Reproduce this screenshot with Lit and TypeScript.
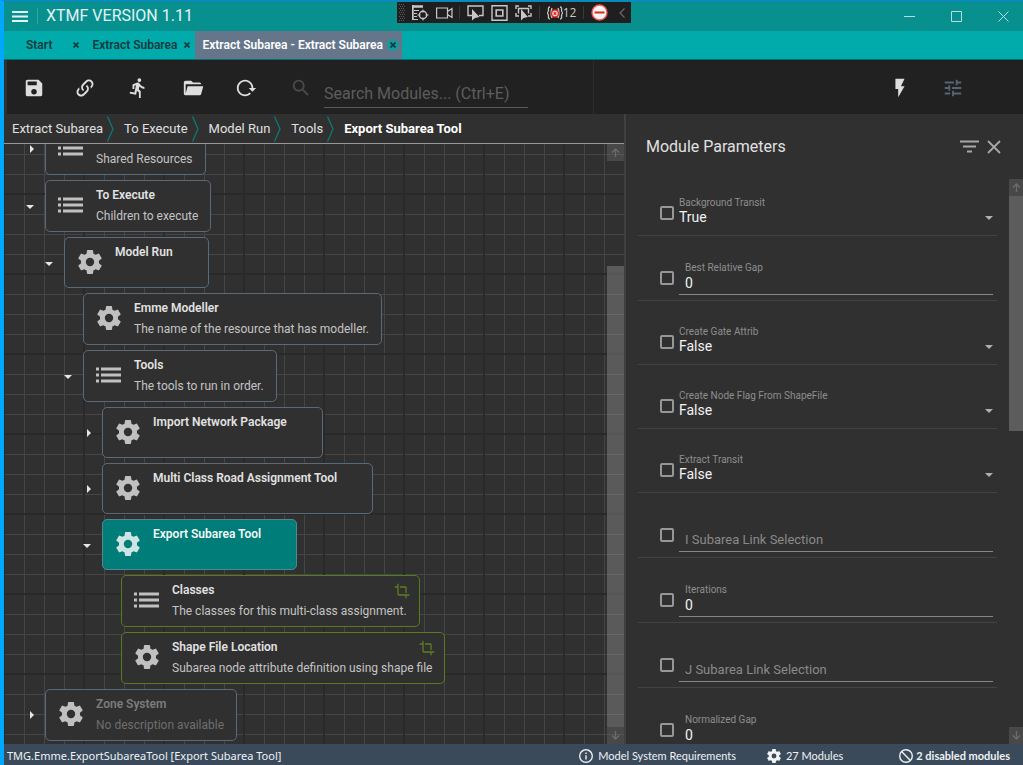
import { LitElement, html, svg, css, nothing } from "lit";
import { customElement, property } from "lit/decorators.js";
import { classMap } from "lit/directives/class-map.js";

const ICONS: Record<string, string> = {
  save: "M15,9H5V5H15M12,19A3,3 0 0,1 9,16A3,3 0 0,1 12,13A3,3 0 0,1 15,16A3,3 0 0,1 12,19M17,3H5C3.89,3 3,3.9 3,5V19A2,2 0 0,0 5,21H19A2,2 0 0,0 21,19V7L17,3Z",
  link: "M10.59,13.41C11,13.8 11,14.44 10.59,14.83C10.2,15.22 9.56,15.22 9.17,14.83C7.22,12.88 7.22,9.71 9.17,7.76V7.76L12.71,4.22C14.66,2.27 17.83,2.27 19.78,4.22C21.73,6.17 21.73,9.34 19.78,11.29L18.29,12.78C18.3,11.96 18.17,11.14 17.89,10.36L18.36,9.88C19.54,8.71 19.54,6.81 18.36,5.64C17.19,4.46 15.29,4.46 14.12,5.64L10.59,9.17C9.41,10.34 9.41,12.24 10.59,13.41M13.41,9.17C13.8,8.78 14.44,8.78 14.83,9.17C16.78,11.12 16.78,14.29 14.83,16.24V16.24L11.29,19.78C9.34,21.73 6.17,21.73 4.22,19.78C2.27,17.83 2.27,14.66 4.22,12.71L5.71,11.22C5.7,12.04 5.83,12.86 6.11,13.65L5.64,14.12C4.46,15.29 4.46,17.19 5.64,18.36C6.81,19.54 8.71,19.54 9.88,18.36L13.41,14.83C14.59,13.66 14.59,11.76 13.41,10.59C13,10.2 13,9.56 13.41,9.17Z",
  run: "M13.49,5.48C14.59,5.48 15.49,4.58 15.49,3.48C15.49,2.38 14.59,1.48 13.49,1.48C12.39,1.48 11.49,2.38 11.49,3.48A2,2 0 0,0 13.49,5.48M9.89,19.38L10.89,14.98L12.99,16.98V22.98H14.99V15.48L12.89,13.48L13.49,10.48A7.32,7.32 0 0,0 18.99,12.98V10.98A5.31,5.31 0 0,1 14.69,8.58L13.69,6.98C13.29,6.38 12.69,5.98 11.99,5.98C11.69,5.98 11.49,6.08 11.19,6.08L5.99,8.28V12.98H7.99V9.58L9.79,8.88L8.19,16.98L3.29,15.98L2.89,17.98L9.89,19.38Z",
  folder: "M19,20H4C2.89,20 2,19.1 2,18V6C2,4.89 2.89,4 4,4H10L12,6H19A2,2 0 0,1 21,8H21L4,8V18L6.14,10H23.21L20.93,18.5C20.7,19.37 19.92,20 19,20Z",
  reload: "M2 12C2 16.97 6.03 21 11 21C13.39 21 15.68 20.06 17.4 18.4L15.9 16.9C14.63 18.25 12.86 19 11 19C4.76 19 1.64 11.46 6.05 7.05C10.46 2.64 18 5.77 18 12H15L19 16H19.1L23 12H20C20 7.03 15.97 3 11 3C6.03 3 2 7.03 2 12Z",
  search: "M9.5,3A6.5,6.5 0 0,1 16,9.5C16,11.11 15.41,12.59 14.44,13.73L14.71,14H15.5L20.5,19L19,20.5L14,15.5V14.71L13.73,14.44C12.59,15.41 11.11,16 9.5,16A6.5,6.5 0 0,1 3,9.5A6.5,6.5 0 0,1 9.5,3M9.5,5C7,5 5,7 5,9.5C5,12 7,14 9.5,14C12,14 14,12 14,9.5C14,7 12,5 9.5,5Z",
  flash: "M7,2V13H10V22L17,10H13L17,2H7Z",
  tune: "M3,17V19H9V17H3M3,5V7H13V5H3M13,21V19H21V17H13V15H11V21H13M7,9V11H3V13H7V15H9V9H7M21,13V11H11V13H21M15,9H17V7H21V5H17V3H15V9Z",
  crop: "M7,17V1H5V5H1V7H5V17A2,2 0 0,0 7,19H17V23H19V19H23V17M17,15H19V7C19,5.89 18.1,5 17,5H9V7H17V15Z",
  cog: "M12,15.5A3.5,3.5 0 0,1 8.5,12A3.5,3.5 0 0,1 12,8.5A3.5,3.5 0 0,1 15.5,12A3.5,3.5 0 0,1 12,15.5M19.43,12.97C19.47,12.65 19.5,12.33 19.5,12C19.5,11.67 19.47,11.34 19.43,11L21.54,9.37C21.73,9.22 21.78,8.95 21.66,8.73L19.66,5.27C19.54,5.05 19.27,4.96 19.05,5.05L16.56,6.05C16.04,5.66 15.5,5.32 14.87,5.07L14.5,2.42C14.46,2.18 14.25,2 14,2H10C9.75,2 9.54,2.18 9.5,2.42L9.13,5.07C8.5,5.32 7.96,5.66 7.44,6.05L4.95,5.05C4.73,4.96 4.46,5.05 4.34,5.27L2.34,8.73C2.21,8.95 2.27,9.22 2.46,9.37L4.57,11C4.53,11.34 4.5,11.67 4.5,12C4.5,12.33 4.53,12.65 4.57,12.97L2.46,14.63C2.27,14.78 2.21,15.05 2.34,15.27L4.34,18.73C4.46,18.95 4.73,19.03 4.95,18.95L7.44,17.94C7.96,18.34 8.5,18.68 9.13,18.93L9.5,21.58C9.54,21.82 9.75,22 10,22H14C14.25,22 14.46,21.82 14.5,21.58L14.87,18.93C15.5,18.67 16.04,18.34 16.56,17.94L19.05,18.95C19.27,19.03 19.54,18.95 19.66,18.73L21.66,15.27C21.78,15.05 21.73,14.78 21.54,14.63L19.43,12.97Z",
  info: "M11,9H13V7H11M12,20C7.59,20 4,16.41 4,12C4,7.59 7.59,4 12,4C16.41,4 20,7.59 20,12C20,16.41 16.41,20 12,20M12,2A10,10 0 0,0 2,12A10,10 0 0,0 12,22A10,10 0 0,0 22,12A10,10 0 0,0 12,2M11,17H13V11H11V17Z",
  ban: "M12,2A10,10 0 0,0 2,12A10,10 0 0,0 12,22A10,10 0 0,0 22,12A10,10 0 0,0 12,2M12,4A8,8 0 0,1 20,12C20,13.85 19.37,15.55 18.31,16.9L7.1,5.69C8.45,4.63 10.15,4 12,4M5.69,7.1L16.9,18.31C15.55,19.37 13.85,20 12,20A8,8 0 0,1 4,12C4,10.15 4.63,8.45 5.69,7.1Z",
};

const icon = (name: string, size: number, box = "0 0 24 24") => html`<svg
  width=${size} height=${size} viewBox=${box} aria-hidden="true">
  <path fill="currentColor" fill-rule="evenodd" d=${ICONS[name]}></path>
</svg>`;

const listIcon = html`<svg width="25" height="16" viewBox="0 0 25 16" aria-hidden="true">
  <g fill="currentColor">
    ${[0, 6, 12].map((y) => svg`<rect x="0" y=${y + 0.5} width="3" height="3"/><rect x="5" y=${y + 0.5} width="20" height="3"/>`)}
  </g>
</svg>`;

const closeMark = html`<svg width="6" height="6" viewBox="0 0 6 6" aria-hidden="true">
  <path d="M0.5 0.5L5.5 5.5M5.5 0.5L0.5 5.5" stroke="currentColor" stroke-width="1.7"></path>
</svg>`;

const arrow = (up: boolean) => html`<svg width="9" height="9" viewBox="0 0 9 9" aria-hidden="true">
  <path d=${up ? "M4.5 9V1M1 4.5L4.5 1L8 4.5" : "M4.5 0V8M1 4.5L4.5 8L8 4.5"} fill="none" stroke="currentColor" stroke-width="1.3"></path>
</svg>`;

interface TreeNode {
  level: number;
  title: string;
  text?: string;
  kind: "list" | "module";
  toggle?: "open" | "closed";
  state?: "selected" | "linked" | "disabled";
}

const NODES: TreeNode[] = [
  { level: 0, title: "", text: "Shared Resources", kind: "list", toggle: "closed" },
  { level: 0, title: "To Execute", text: "Children to execute", kind: "list", toggle: "open" },
  { level: 1, title: "Model Run", kind: "module", toggle: "open" },
  { level: 2, title: "Emme Modeller", text: "The name of the resource that has modeller.", kind: "module" },
  { level: 2, title: "Tools", text: "The tools to run in order.", kind: "list", toggle: "open" },
  { level: 3, title: "Import Network Package", kind: "module", toggle: "closed" },
  { level: 3, title: "Multi Class Road Assignment Tool", kind: "module", toggle: "closed" },
  { level: 3, title: "Export Subarea Tool", kind: "module", toggle: "open", state: "selected" },
  { level: 4, title: "Classes", text: "The classes for this multi-class assignment.", kind: "list", state: "linked" },
  { level: 4, title: "Shape File Location", text: "Subarea node attribute definition using shape file", kind: "module", state: "linked" },
  { level: 0, title: "Zone System", text: "No description available", kind: "module", toggle: "closed", state: "disabled" },
];

interface Param {
  name: string;
  value: string;
  choice?: boolean;
}

const PARAMS: Param[] = [
  { name: "Background Transit", value: "True", choice: true },
  { name: "Best Relative Gap", value: "0" },
  { name: "Create Gate Attrib", value: "False", choice: true },
  { name: "Create Node Flag From ShapeFile", value: "False", choice: true },
  { name: "Extract Transit", value: "False", choice: true },
  { name: "I Subarea Link Selection", value: "" },
  { name: "Iterations", value: "0" },
  { name: "J Subarea Link Selection", value: "" },
  { name: "Normalized Gap", value: "0" },
];

const reset = css`
  * { box-sizing: border-box; }
  svg { display: block; flex: none; }
  button, input, select {
    margin: 0; padding: 0; border: 0; border-radius: 0; background: none;
    color: inherit; font: inherit; outline: none;
  }
  button { display: flex; align-items: center; justify-content: center; }
`;

@customElement("title-bar")
class TitleBar extends LitElement {
  static styles = [reset, css`
    :host { display: flex; align-items: center; height: 30px; padding: 0 12px 0 8px; background: #08908f; color: #e4f3f3; }
    .menu { width: 16px; height: 30px; }
    .rule { width: 1px; height: 16px; margin: 0 8px 0 9px; background: #3aa3a2; }
    .name { font-size: 16px; line-height: 30px; }
    .window { display: flex; gap: 32px; margin-left: auto; color: #b5dedd; }
    .window button { width: 15px; height: 30px; }
  `];
  render() {
    return html`
      <button class="menu" aria-label="Menu">
        <svg width="16" height="12" viewBox="0 0 16 12"><path d="M0 2H16M0 6.5H16M0 11H16" stroke="currentColor" stroke-width="1.8"></path></svg>
      </button>
      <span class="rule"></span>
      <span class="name">XTMF VERSION 1.11</span>
      <div class="window">
        <button aria-label="Minimize"><svg width="11" height="11" viewBox="0 0 11 11"><path d="M0 5.5H11" stroke="currentColor"></path></svg></button>
        <button aria-label="Maximize"><svg width="11" height="11" viewBox="0 0 11 11"><path d="M0.5 0.5H10.5V10.5H0.5Z" stroke="currentColor" fill="none"></path></svg></button>
        <button aria-label="Close"><svg width="11" height="11" viewBox="0 0 11 11"><path d="M0.5 0.5L10.5 10.5M10.5 0.5L0.5 10.5" stroke="currentColor"></path></svg></button>
      </div>`;
  }
}

@customElement("debug-bar")
class DebugBar extends LitElement {
  static styles = [reset, css`
    :host { display: flex; align-items: center; height: 21px; width: 234px; padding: 0 6px 0 2px; background: #1f1f1f; color: #c8c8c8; justify-content: space-between; }
    .count { display: flex; align-items: center; font: 12px/16px "Open Sans", sans-serif; }
    .bar { width: 1px; height: 13px; background: #3a3a3a; }
    .dim { margin-left: 4px; color: #6a6a6a; }
  `];
  render() {
    return html`
      <svg width="6" height="18" viewBox="0 0 6 18">
        ${[0, 1, 2, 3, 4, 5, 6, 7, 8].map((i) => svg`<path d="M${i % 2} ${i * 2 + 0.5}h1m1 0h1m1 0h1" stroke="#5a5a5a"/>`)}
      </svg>
      <button aria-label="Live tree">
        <svg width="17" height="16" viewBox="0 0 17 16" fill="none" stroke="currentColor">
          <path d="M0.5 0V15M0 1.5H11" stroke-width="2.4"></path><path d="M2 5.5H7M2 8.5H5M2 11.5H5M1 14.5H6"></path>
          <circle cx="11" cy="10" r="3.7" stroke-width="1.4"></circle><path d="M11 4.5V7.5M11 12.5V15.5M5.5 10H8.5M13.5 10H16.5"></path>
        </svg>
      </button>
      <button aria-label="Hot reload">
        <svg width="17" height="12" viewBox="0 0 17 12" fill="none" stroke="currentColor" stroke-width="1.2"><path d="M0.6 1H11.5V11H0.6ZM11.5 4.5L16 1.5V10.5L11.5 7.5"></path></svg>
      </button>
      <span class="bar"></span>
      <button aria-label="Select element">
        <svg width="17" height="16" viewBox="0 0 17 16"><path d="M5 10.5H1V1H16V10.5H12" fill="none" stroke="currentColor" stroke-width="1.4"></path><path d="M5 4V15.5L8 13L12.5 12Z" fill="currentColor"></path></svg>
      </button>
      <button aria-label="Display layout adorners">
        <svg width="17" height="16" viewBox="0 0 17 16" fill="none" stroke="currentColor"><path d="M1 0.7H16V15.3H1Z" stroke-width="1.4"></path><path d="M5.2 5H11.8V11H5.2Z" stroke-width="1.6"></path></svg>
      </button>
      <button aria-label="Track focused element">
        <svg width="17" height="16" viewBox="0 0 17 16"><path d="M1 4V1H4M13 1H16V4M16 8V11H13M4 11H1V8M3.5 8.5V3.5H13.5V8.5" fill="none" stroke="currentColor" stroke-width="1.4"></path><path d="M6 4V15.5L8.5 13L13 12Z" fill="currentColor"></path></svg>
      </button>
      <span class="bar"></span>
      <button class="count" aria-label="Binding failures">
        <svg width="16" height="14" viewBox="0 0 16 14" fill="none" stroke="currentColor" stroke-width="1.3"><path d="M3 1Q1 1 1.5 4Q1.5 6.5 0 7Q1.5 7.5 1.5 10Q1 13 3 13M13 1Q15 1 14.5 4Q14.5 6.5 16 7Q14.5 7.5 14.5 10Q15 13 13 13M5 2Q3 7 5 12M11 2Q13 7 11 12"></path><circle cx="8" cy="7.5" r="3.5" fill="#e8e8e8" stroke="#ef2b22" stroke-width="1.6"></circle><path d="M6.7 6.2L9.3 8.8M9.3 6.2L6.7 8.8" stroke="#ef2b22"></path></svg>
        12
      </button>
      <span class="bar"></span>
      <button aria-label="Stop">
        <svg width="17" height="17" viewBox="0 0 17 17"><circle cx="8.5" cy="8.5" r="7.5" fill="#f4f4f4" stroke="#ef5a50" stroke-width="1.4"></circle><path d="M3.5 8.5H13.5" stroke="#e0241b" stroke-width="2"></path></svg>
      </button>
      <button class="dim" aria-label="Collapse">
        <svg width="6" height="10" viewBox="0 0 6 10"><path d="M5.5 0.5L1 5L5.5 9.5" fill="none" stroke="currentColor" stroke-width="1.2"></path></svg>
      </button>`;
  }
}

@customElement("module-tree")
class ModuleTree extends LitElement {
  static styles = [reset, css`
    :host {
      display: flex; flex: 1; min-height: 0; overflow: hidden; border-top: 1px solid #989898;
      background-color: #303030;
      background-image:
        linear-gradient(90deg, #292929 2px, transparent 2px),
        linear-gradient(#292929 2px, transparent 2px),
        linear-gradient(90deg, #464646 1px, transparent 1px),
        linear-gradient(#464646 1px, transparent 1px);
      background-size: 80px 80px, 80px 80px, 20px 20px, 20px 20px;
      background-position: -1px 0, 0 49px, 0 0, 0 10px;
    }
    .nodes { flex: 1; min-width: 0; margin: -21px 0 0; padding: 0; list-style: none; }
    .row { display: flex; margin-bottom: 5px; }
    .level-0 { padding-left: 19px; }
    .level-1 { padding-left: 38px; }
    .level-2 { padding-left: 57px; }
    .level-3 { padding-left: 76px; }
    .level-4 { padding-left: 95px; }
    .toggle { flex: none; width: 22px; padding-right: 5px; color: #e6e6e6; }
    .toggle.open { padding: 2px 8px 0 0; }
    .node {
      display: flex; align-items: center; min-height: 51px; padding: 0 12px; border: 1px solid #5b6a79;
      border-radius: 5px; background: #303030; color: #c0c0c0;
    }
    .glyph { display: flex; justify-content: center; width: 25px; margin: 0 13px 2px 0; }
    .body { align-self: stretch; padding: 4px 0 3px; }
    .head { display: flex; justify-content: space-between; gap: 8px; }
    .title { font-size: 12px; line-height: 20px; font-weight: 600; color: #e2e2e2; }
    .slot { width: 15px; height: 20px; padding-top: 3px; color: #5e7d22; }
    .linked .slot { margin-right: -2px; }
    .text { margin: 0; font-size: 12px; line-height: 23px; color: #c4c4c4; white-space: nowrap; }
    .selected { background: #007c79; border-color: #4d8a91; color: #cce5e4; }
    .selected .title { color: #f2f8f8; }
    .linked { border-color: #5b7a20; }
    .disabled .title { color: #7c7c7c; }
    .disabled .text { color: #6e6e6e; }
    .scroll { display: flex; flex-direction: column; width: 17px; color: #6c6c6c; }
    .step { height: 17px; background: rgba(110, 110, 110, 0.4); }
    .space { flex: 105; }
    .thumb { flex: 461; background: rgba(150, 150, 150, 0.42); }
  `];
  render() {
    return html`
      <ul class="nodes">
        ${NODES.map((n) => html`
          <li class="row level-${n.level}">
            ${n.toggle
              ? html`<button class="toggle ${n.toggle}" aria-label="Toggle">
                  ${n.toggle === "open"
                    ? html`<svg width="8" height="4" viewBox="0 0 8 4"><path d="M0 0H8L4 4Z" fill="currentColor"></path></svg>`
                    : html`<svg width="4" height="8" viewBox="0 0 4 8"><path d="M0 0V8L4 4Z" fill="currentColor"></path></svg>`}
                </button>`
              : html`<span class="toggle"></span>`}
            <div class="node ${n.state ?? ""}">
              <span class="glyph">${n.kind === "list" ? listIcon : icon("cog", 24, "2 2 20 20")}</span>
              <div class="body">
                <div class="head">
                  <span class="title">${n.title}</span>
                  <span class="slot">${n.state === "linked" ? icon("crop", 16) : nothing}</span>
                </div>
                ${n.text ? html`<p class="text">${n.text}</p>` : nothing}
              </div>
            </div>
          </li>`)}
      </ul>
      <div class="scroll">
        <button class="step" aria-label="Scroll up">${arrow(true)}</button>
        <span class="space"></span><span class="thumb"></span>
        <button class="step" aria-label="Scroll down">${arrow(false)}</button>
      </div>`;
  }
}

@customElement("param-row")
class ParamRow extends LitElement {
  @property({ attribute: false }) param!: Param;
  static styles = [reset, css`
    :host { display: block; flex: none; border-bottom: 1px solid #434343; }
    .row { display: flex; align-items: flex-end; height: 64px; padding: 0 4px 5px 22px; }
    .row.choice { height: 63px; padding-bottom: 10px; }
    .tick { appearance: none; flex: none; width: 14px; height: 14px; margin: 0 5px 10px 0; border: 2px solid #979797; border-radius: 2px; }
    .choice .tick { margin-bottom: 5px; }
    .field { position: relative; flex: 1; display: flex; flex-direction: column; padding: 0 6px; border-bottom: 1px solid #868686; }
    .choice .field { padding: 0; border: 0; }
    .label { font-size: 10px; line-height: 12px; color: #8e8e8e; }
    .value { width: 100%; height: 17px; margin-bottom: 3px; font-size: 14px; line-height: 16px; color: #f2f2f2; appearance: none; }
    .choice .value { height: 16px; margin: 0; }
    .empty .value { font-size: 13px; }
    .value::placeholder { color: #8a8a8a; opacity: 1; }
    .caret { position: absolute; right: 0; bottom: 5px; color: #b0b0b0; }
  `];
  render() {
    const { name, value, choice } = this.param;
    return html`
      <div class="row ${classMap({ choice: !!choice, empty: !value })}">
        <input class="tick" type="checkbox" aria-label="Quick parameter: ${name}">
        <div class="field">
          ${value ? html`<label class="label" for="value">${name}</label>` : nothing}
          ${choice
            ? html`<select class="value" id="value"><option ?selected=${value === "True"}>True</option><option ?selected=${value === "False"}>False</option></select>
              <svg class="caret" width="8" height="4" viewBox="0 0 8 4"><path d="M0 0H8L4 4Z" fill="currentColor"></path></svg>`
            : html`<input class="value" id="value" type="text" aria-label=${name} placeholder=${value ? nothing : name} .value=${value}>`}
        </div>
      </div>`;
  }
}

@customElement("app-root")
class AppRoot extends LitElement {
  static styles = [reset, css`
    :host {
      position: relative; display: flex; flex-direction: column; height: 100vh; overflow: hidden;
      border-top: 1px solid #0a84e4; border-left: 4px solid #00a8fb;
      background: #303030; color: #e0e0e0; font-family: Roboto, sans-serif;
    }
    .debug { position: absolute; top: 1px; left: 393px; }
    .tabs { display: flex; height: 29px; background: #02abab; border-bottom: 1px solid #04706f; font-size: 12px; font-weight: 600; line-height: 28px; color: #123c3c; }
    .tab { display: flex; align-items: center; gap: 4px; padding: 0 0 0 10px; }
    .tab.start { padding-left: 22px; gap: 18px; }
    .tab.current { margin-left: 2px; padding: 0 3px 0 7px; background: #65768a; color: #fff; }
    .close { width: 12px; height: 12px; border-radius: 6px; color: #14393c; }
    .current .close { background: #129a9f; }
    .toolbar { display: flex; align-items: center; height: 54px; padding-top: 2px; border-left: 3px solid #303030; background: #212121; }
    .tool { width: 53px; height: 40px; color: #dedede; }
    .tool.link, .tool.run { padding-right: 3px; }
    .tool.search { width: 52px; padding-left: 5px; color: #4a4a4a; }
    .find { width: 204px; height: 28px; margin-top: 12px; border-bottom: 1px solid #5a5a5a; font-size: 16px; }
    .find::placeholder { color: #5d5d5d; opacity: 1; }
    .split { align-self: stretch; width: 1px; margin: -2px auto 0 65px; background: #2c2c2c; }
    .tool.tune { color: #566578; margin-right: 44px; }
    .main { display: grid; grid-template-columns: minmax(0, 1fr) 399px; flex: 1; min-height: 0; }
    .left { display: flex; flex-direction: column; min-height: 0; }
    .crumbs { display: flex; align-items: center; height: 29px; padding-left: 8px; font-size: 13px; }
    .crumb { color: inherit; text-decoration: none; }
    .crumb.here { font-weight: 700; color: #fff; }
    .chevron { margin: 0 10px 0 4px; color: #0f7876; }
    .right { display: flex; flex-direction: column; min-height: 0; border-left: 2px solid #404040; }
    .heading { display: flex; align-items: center; flex: none; height: 65px; padding: 0 22px 0 20px; }
    .heading h2 { margin: 0 auto 0 0; font-size: 16px; line-height: 20px; font-weight: 400; }
    .heading button { height: 24px; color: #a8a8a8; }
    .filter { width: 20px; margin-right: 8px; }
    .dismiss { width: 14px; }
    .params { display: flex; flex: 1; min-height: 0; overflow: hidden; }
    .list { display: flex; flex-direction: column; flex: 1; margin: -7px 12px 0; min-height: 0; }
    .scroll { display: flex; flex-direction: column; width: 14px; color: #6c6c6c; }
    .step { height: 17px; background: #484848; }
    .thumb { flex: 235; background: #5c5c5c; }
    .space { flex: 296; }
    .status { display: flex; align-items: center; height: 22px; padding: 2px 13px 0 3px; background: #3a4a5b; font: 11px/18px Lato, sans-serif; color: #f0f2f4; }
    .path { margin-right: auto; font-family: "Noto Sans", sans-serif; }
    .item { display: flex; align-items: center; gap: 5px; }
    .item.modules { margin: 0 56px 0 31px; }
    .item.disabled { gap: 3px; font-weight: 700; }
  `];
  render() {
    const chevron = html`<svg class="chevron" width="7" height="26" viewBox="0 0 7 26" aria-hidden="true"><path d="M0.5 0.5L6 13L0.5 25.5" fill="none" stroke="currentColor" stroke-width="1.3"></path></svg>`;
    return html`
      <title-bar></title-bar>
      <debug-bar class="debug"></debug-bar>
      <nav class="tabs">
        <div class="tab start">Start<button class="close" aria-label="Close Start">${closeMark}</button></div>
        <div class="tab">Extract Subarea<button class="close" aria-label="Close Extract Subarea">${closeMark}</button></div>
        <div class="tab current">Extract Subarea - Extract Subarea<button class="close" aria-label="Close current tab">${closeMark}</button></div>
      </nav>
      <div class="toolbar">
        ${["save", "link", "run", "folder", "reload"].map((n) => html`<button class="tool ${n}" aria-label=${n}>${icon(n, 22)}</button>`)}
        <button class="tool search" aria-label="Search">${icon("search", 22)}</button>
        <input class="find" type="text" aria-label="Search modules" placeholder="Search Modules... (Ctrl+E)">
        <span class="split"></span>
        <button class="tool" aria-label="Quick run">${icon("flash", 22)}</button>
        <button class="tool tune" aria-label="Parameters">${icon("tune", 22)}</button>
      </div>
      <div class="main">
        <div class="left">
          <nav class="crumbs">
            ${["Extract Subarea", "To Execute", "Model Run", "Tools"].map((c) => html`<a class="crumb" href="#">${c}</a>${chevron}`)}
            <a class="crumb here" href="#">Export Subarea Tool</a>
          </nav>
          <module-tree></module-tree>
        </div>
        <section class="right">
          <header class="heading">
            <h2>Module Parameters</h2>
            <button class="filter" aria-label="Filter"><svg width="19" height="13" viewBox="0 0 19 13"><path d="M0 1.5H19M3 6.5H16M7 11.5H12" stroke="currentColor" stroke-width="2"></path></svg></button>
            <button class="dismiss" aria-label="Close parameters"><svg width="14" height="14" viewBox="0 0 14 14"><path d="M1 1L13 13M13 1L1 13" stroke="currentColor" stroke-width="1.8"></path></svg></button>
          </header>
          <div class="params">
            <div class="list">${PARAMS.map((p) => html`<param-row .param=${p}></param-row>`)}</div>
            <div class="scroll">
              <button class="step" aria-label="Scroll up">${arrow(true)}</button>
              <span class="thumb"></span><span class="space"></span>
              <button class="step" aria-label="Scroll down">${arrow(false)}</button>
            </div>
          </div>
        </section>
      </div>
      <footer class="status">
        <span class="path">TMG.Emme.ExportSubareaTool [Export Subarea Tool]</span>
        <span class="item">${icon("info", 14, "2 2 20 20")}Model System Requirements</span>
        <span class="item modules">${icon("cog", 14, "2 2 20 20")}27 Modules</span>
        <span class="item disabled">${icon("ban", 14, "2 2 20 20")}2 disabled modules</span>
      </footer>`;
  }
}
